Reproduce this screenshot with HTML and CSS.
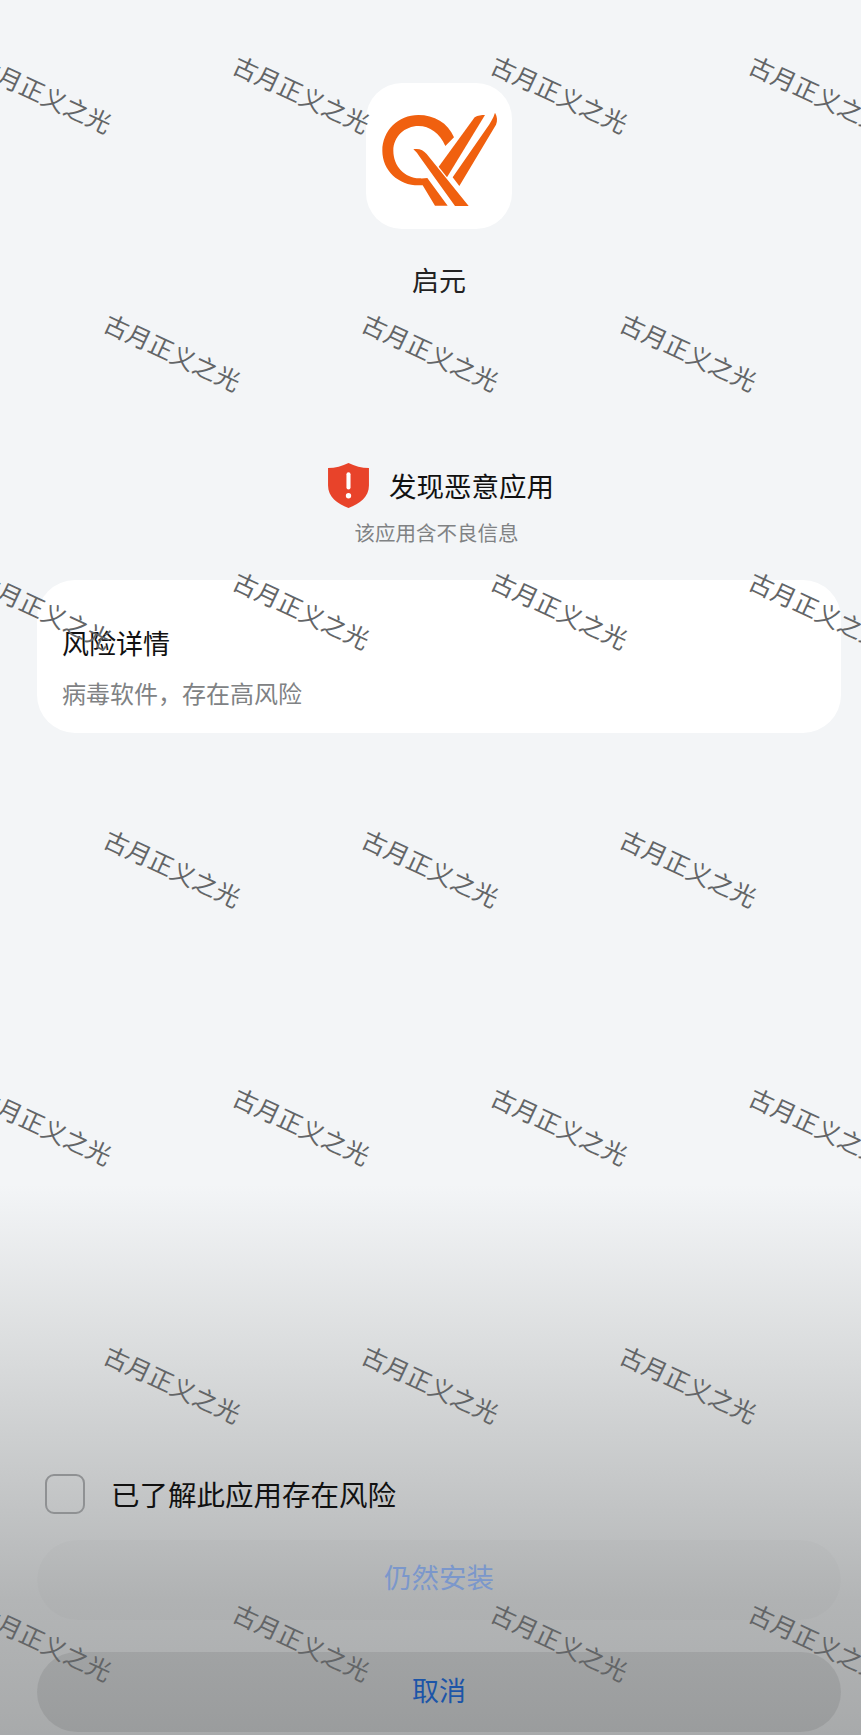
FILE: index.html

```html
<!DOCTYPE html>
<html lang="zh-CN">
<head>
    <meta charset="UTF-8">
    <meta name="viewport" content="width=device-width, initial-scale=1.0">
    <title>发现恶意应用</title>
    <link rel="stylesheet" href="styles.css">
</head>
<body>
    <div class="page">
        <div class="app-icon">
            <svg viewBox="78 69 438 438" width="146" height="146">
                <path class="logo" d="M342 232C324 188 282 165 235 165C175 165 127 212 127 272C127 332 177 378 240 376L248 376L285 437L323 437L262 354C254 355 246 356 238 355C194 354 160 318 160 272C160 230 194 198 236 198C268 198 300 220 316 258Z"/>
                <path class="logo" d="M220 268C236 264 250 270 260 282L386 438L345 438L240 292C234 282 228 274 220 268Z"/>
                <path class="logo" d="M404 172C414 166 424 165 435 165L321 352L296 320Z"/>
                <path class="logo" d="M465 158C472 170 473 182 468 194L358 378L338 352L440 205C450 190 460 175 465 158Z"/>
            </svg>
        </div>
        <div class="app-name">启元</div>

        <div class="alert-head">
            <svg class="shield" viewBox="0 0 40 44" width="41" height="45">
                <path d="M20 0C26 3 33 5 40 5V22C40 33 31 40 20 44C9 40 0 33 0 22V5C7 5 14 3 20 0Z" fill="#e8432a"/>
                <rect x="18" y="9" width="4" height="17" rx="2" fill="#fff"/>
                <circle cx="20" cy="32" r="2.6" fill="#fff"/>
            </svg>
            <span class="alert-title">发现恶意应用</span>
        </div>
        <div class="alert-sub">该应用含不良信息</div>

        <div class="card">
            <div class="card-title">风险详情</div>
            <div class="card-text">病毒软件，存在高风险</div>
        </div>

        <div class="bottom">
            <label class="confirm">
                <span class="checkbox"></span>
                <span>已了解此应用存在风险</span>
            </label>
            <div class="btn btn-install">仍然安装</div>
            <div class="btn btn-cancel">取消</div>
        </div>
    </div>

    <div class="watermarks">
        <div class="wm-row">
            <span>古月正义之光</span><span>古月正义之光</span><span>古月正义之光</span><span>古月正义之光</span>
        </div>
        <div class="wm-row shifted">
            <span>古月正义之光</span><span>古月正义之光</span><span>古月正义之光</span>
        </div>
        <div class="wm-row">
            <span>古月正义之光</span><span>古月正义之光</span><span>古月正义之光</span><span>古月正义之光</span>
        </div>
        <div class="wm-row shifted">
            <span>古月正义之光</span><span>古月正义之光</span><span>古月正义之光</span>
        </div>
        <div class="wm-row">
            <span>古月正义之光</span><span>古月正义之光</span><span>古月正义之光</span><span>古月正义之光</span>
        </div>
        <div class="wm-row shifted">
            <span>古月正义之光</span><span>古月正义之光</span><span>古月正义之光</span>
        </div>
        <div class="wm-row">
            <span>古月正义之光</span><span>古月正义之光</span><span>古月正义之光</span><span>古月正义之光</span>
        </div>
    </div>
</body>
</html>
```

FILE: styles.css

```css
* {
    box-sizing: border-box;
}

html, body {
    margin: 0;
    height: 1735px;
    overflow: hidden;
}

body {
    position: relative;
    font-family: "Noto Sans CJK SC", "Noto Sans", sans-serif;
    color: #111;
    background: linear-gradient(180deg, #f3f5f7 0, #f3f5f7 1185px, #dcdedf 1340px, #c6c8c9 1480px, #b3b5b6 1600px, #a8aaab 1735px);
}

.page {
    display: flex;
    flex-direction: column;
    align-items: center;
    height: 1735px;
    padding: 83px 20px 0 37px;
}

.app-icon {
    width: 146px;
    height: 146px;
    background-color: #fff;
    border-radius: 36px;
}

.app-icon svg {
    display: block;
}

.logo {
    fill: #f0600f;
}

.app-name {
    margin-top: 32px;
    font-size: 27px;
    line-height: 38px;
    color: #222;
}

.alert-head {
    display: flex;
    align-items: center;
    gap: 20px;
    margin-top: 163px;
    margin-left: 4px;
    height: 46px;
}

.alert-title {
    font-size: 27.5px;
    line-height: 40px;
}

.alert-sub {
    margin-top: 9px;
    margin-right: 5px;
    font-size: 20.5px;
    line-height: 30px;
    color: #808284;
}

.card {
    align-self: stretch;
    height: 153px;
    margin-top: 33px;
    padding: 43px 25px 0;
    background-color: #fff;
    border-radius: 38px;
}

.card-title {
    font-size: 27px;
    line-height: 40px;
}

.card-text {
    margin-top: 12px;
    font-size: 24px;
    line-height: 36px;
    color: #808284;
}

.bottom {
    align-self: stretch;
    margin-top: auto;
    padding-bottom: 3px;
}

.confirm {
    display: flex;
    align-items: center;
    gap: 26px;
    margin-left: 8px;
    font-size: 28.5px;
    line-height: 40px;
}

.checkbox {
    width: 40px;
    height: 40px;
    border: 2.5px solid #8f9193;
    border-radius: 9px;
}

.btn {
    display: flex;
    align-items: center;
    justify-content: center;
    height: 80px;
    padding-bottom: 8px;
    border-radius: 40px;
    font-size: 27px;
}

.btn-install {
    margin-top: 26px;
    font-size: 27.5px;
    color: #7b97cb;
    background-color: rgba(0, 0, 0, 0.012);
}

.btn-cancel {
    margin-top: 32px;
    padding-bottom: 6px;
    color: #1c55a8;
    background-color: rgba(0, 0, 0, 0.08);
}

/* watermark layer over the whole page */
.watermarks {
    position: absolute;
    top: 0;
    left: 0;
    width: 861px;
    height: 1735px;
    overflow: hidden;
    padding-top: 93px;
    pointer-events: none;
}

.wm-row {
    display: flex;
    height: 258px;
    margin-left: -85px;
}

.wm-row.shifted {
    margin-left: 43.5px;
}

.wm-row span {
    flex: 0 0 258px;
    height: 0;
    display: flex;
    align-items: center;
    justify-content: center;
    font-size: 24.5px;
    color: #636567;
    white-space: nowrap;
    transform: rotate(25deg);
}
```
